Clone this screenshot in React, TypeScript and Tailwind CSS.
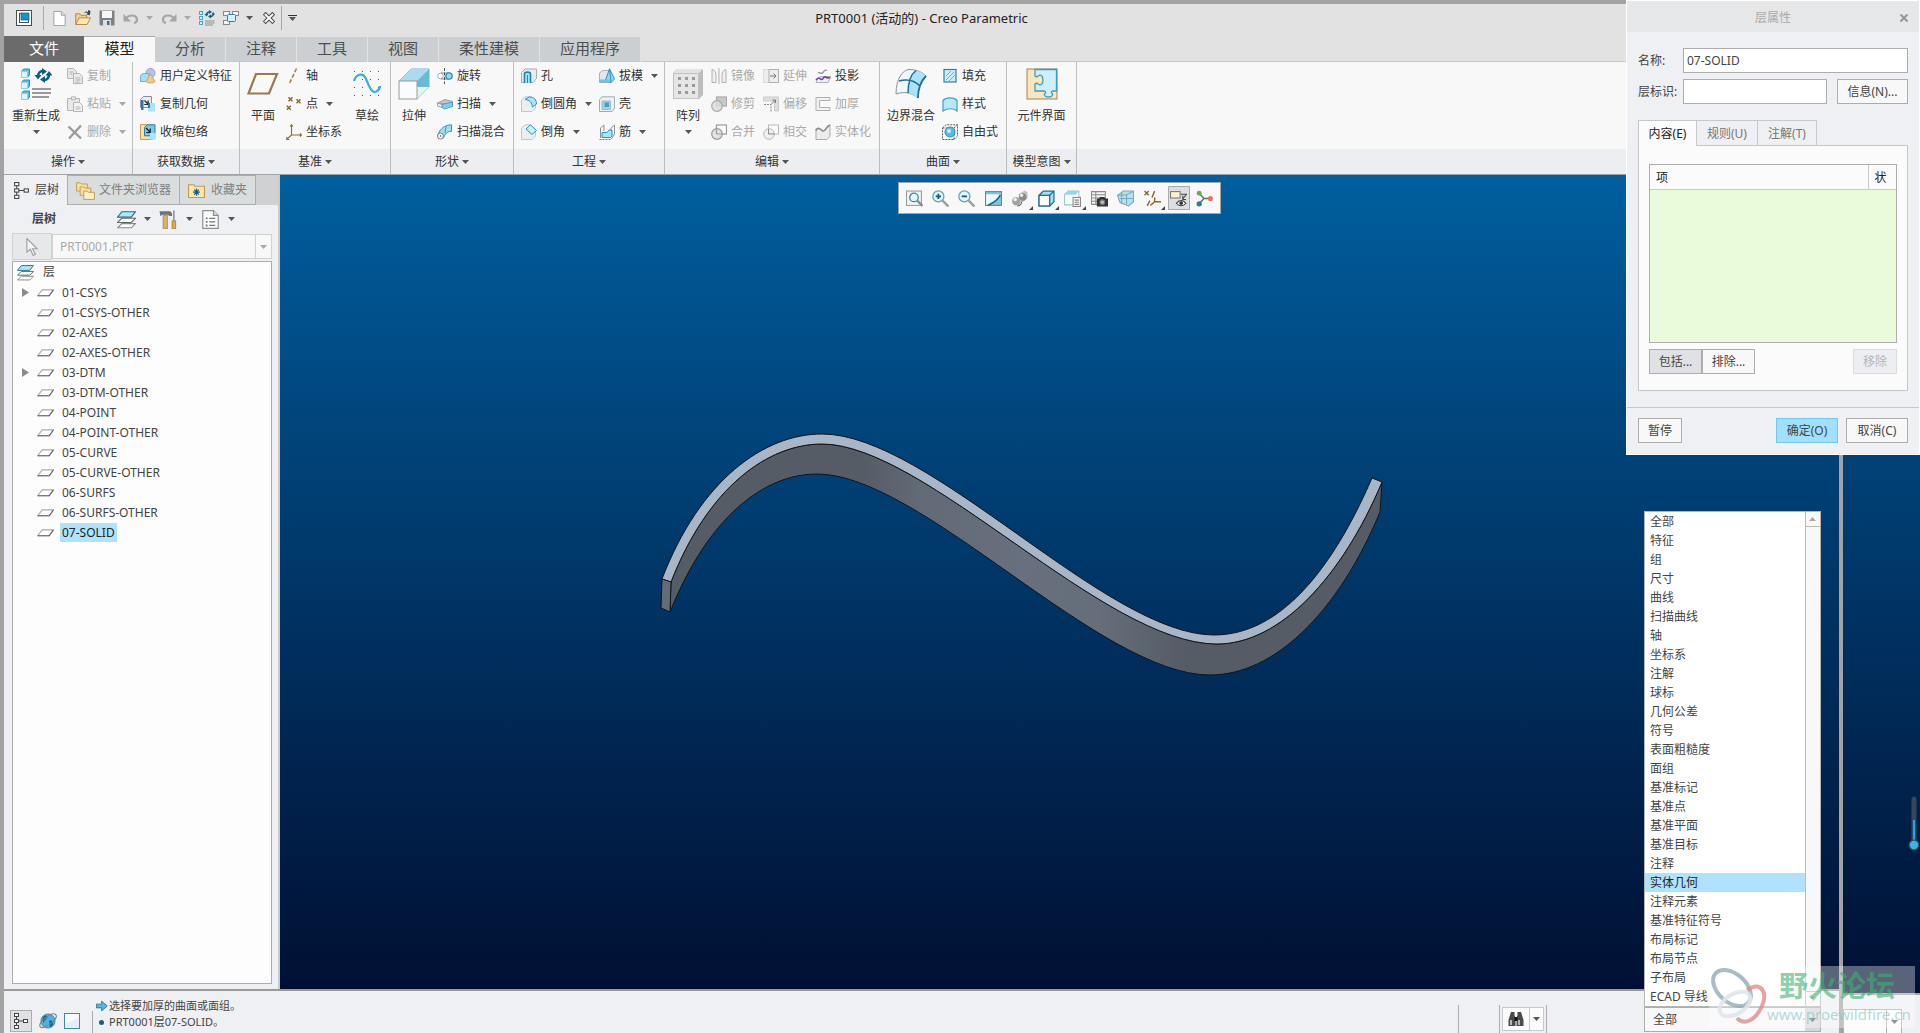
import { useState } from 'react';
import type { ReactNode } from 'react';

interface IconProps {
  name: string;
  size?: number;
}

// Small drawings, all on a 16x16 grid
const icons: Record<string, ReactNode> = {
  app: (
    <>
      <rect x=".5" y=".5" width="15" height="15" fill="#fff" stroke="#4d4d4d" />
      <rect x="3.5" y="3.5" width="9" height="9" fill="#fff" stroke="#4d4d4d" />
      <rect x="5" y="3" width="8" height="7" fill="#0a96d8" stroke="#205a78" strokeWidth=".7" />
    </>
  ),
  newFile: (
    <>
      <path d="M2 .5h8l4 4v11H2z" fill="#fdfeff" stroke="#9aa0a4" />
      <path d="M10 .5v4h4" fill="#dfe6ea" stroke="#9aa0a4" />
    </>
  ),
  open: (
    <>
      <path d="M.7 14.5V3.8h4l1.2 1.5h5.8v2.5" fill="#f1cf8c" stroke="#b98c3c" />
      <path d="M.7 14.5 4 7.8h11.5l-3.4 6.7z" fill="#fbe6b6" stroke="#b98c3c" />
      <path d="M9 3c1-2 3-2 4-.7V0l2.5 1-.6 4.2-3.6-.8 1.3-.7C11.8 2.2 10.400 2 9 3z" fill="#3e4448" />
    </>
  ),
  save: (
    <>
      <path d="M.5.5h15v15h-14l-1-1z" fill="#7c8185" />
      <rect x="3" y="1" width="10" height="7" fill="#f7f7f7" />
      <rect x="4" y="10" width="8" height="6" fill="#d7e2e8" />
      <rect x="8" y="11" width="2.500" height="4" fill="#5e6468" />
    </>
  ),
  undo: (
    <>
      <path d="M3 9C5 4.500 13.500 4 14 9.500c0 2-1.500 3.300-3 3.500" fill="none" stroke="#a3a5a7" strokeWidth="2.200" />
      <path d="M.5 4v7.500H8z" fill="#a3a5a7" />
    </>
  ),
  redo: (
    <>
      <path d="M13 9C11 4.500 2.500 4 2 9.500c0 2 1.500 3.300 3 3.500" fill="none" stroke="#a3a5a7" strokeWidth="2.200" />
      <path d="M15.500 4v7.500H8z" fill="#a3a5a7" />
    </>
  ),
  regen: (
    <>
      <g fill="#cdf1fd" stroke="#2b93bf" strokeWidth=".8">
        <rect x=".6" y="1.500" width="3" height="3" />
        <rect x=".6" y="6.500" width="3" height="3" />
        <rect x=".6" y="11.500" width="3" height="3" />
      </g>
      <path d="M6 11h9.500M6 13h9.500M6 15h8" stroke="#8f8f8f" />
      <path d="M7.500 5c.3-2 1.500-3 3-3M14.500 3.500c-.3 2-1.500 3-3 3" fill="none" stroke="#0d5f86" strokeWidth="1.600" />
      <path d="M10 0l3 2-3 2zM12 4.500 9 6.500l3 2zM5.500 4h4L7.500 6.500zM12.500 4.500h3.500L14.200 2z" fill="#0d5f86" />
    </>
  ),
  windows: (
    <>
      <g fill="#f5f5f5" stroke="#888">
        <rect x=".5" y="1.500" width="6" height="4" />
        <rect x="9.500" y="1.500" width="6" height="4" />
        <rect x=".5" y="10.500" width="6" height="4" />
      </g>
      <rect x="4.500" y="4.500" width="8" height="7" rx="1" fill="#d5f2fc" stroke="#3a7f9c" />
    </>
  ),
  close: (
    <>
      <path d="M3.500 3.500l9 9M12.500 3.500l-9 9" stroke="#4a4a4a" strokeWidth="5.400" strokeLinecap="square" />
      <path d="M3.500 3.500l9 9M12.500 3.500l-9 9" stroke="#fff" strokeWidth="2.800" strokeLinecap="square" />
    </>
  ),
  copy: (
    <g fill="#e9e9e9" stroke="#b5b5b5">
      <path d="M.5.500h6l3 3v7h-9z" />
      <path d="M6.500 5.500h6l3 3v7h-9z" />
      <path d="M2.500 4h4M2.500 6h3M8.500 10h5M8.500 12h5M8.500 14h4" />
    </g>
  ),
  paste: (
    <g fill="#e9e9e9" stroke="#b5b5b5">
      <path d="M.5 2.500h12v12H.5z" />
      <path d="M4.500.800h4v3h-4z" />
      <path d="M6.500 6.500h6l3 3v6h-9z" fill="#f3f3f3" />
      <path d="M8.500 11h5M8.500 13h5" />
    </g>
  ),
  remove: <path d="M1.500 2.500l12.500 12M14 1.500 2 14.500" stroke="#9b9b9b" strokeWidth="2.400" fill="none" />,
  udf: (
    <>
      <circle cx="10.500" cy="5" r="4.500" fill="#b9c3ee" stroke="#7f8fd0" strokeWidth=".8" />
      <path d="M.5 7.500 3 5.500h6v6L7 13.500H.500z" fill="#9fe0f8" stroke="#4fa7cc" strokeWidth=".8" />
      <path d="M10.500 5.500 15 13.500c-1 2-8 2-9 0z" fill="#f0c98a" stroke="#c99a53" strokeWidth=".8" />
    </>
  ),
  copyGeom: (
    <>
      <path d="M.5 3.500 3.500.500h8v8l-3 3h-8z" fill="#e9ecee" stroke="#8b9094" />
      <rect x="1" y="4" width="2.500" height="10" fill="#2d7ba0" />
      <path d="M4.500 4.500 8 8M8.200 4.500v4h-4" stroke="#222" fill="none" strokeWidth="1.200" />
      <rect x="8" y="7" width="7" height="8.500" fill="#a5e6fb" />
      <rect x="8" y="7" width="2" height="5" fill="#2d7ba0" />
    </>
  ),
  shrink: (
    <>
      <path d="M.5.500h6v11h6v4H.500z" fill="#f7dfa9" stroke="#c79d4e" />
      <path d="M4.500 3.500 7 .800h8v8l-3 3H4.500z" fill="#79c8e6" stroke="#2d7ba0" />
      <path d="M6 4l4 4M10.200 4.500v4h-4" stroke="#123" fill="none" strokeWidth="1.200" />
      <rect x="10" y="9" width="6" height="6.500" fill="#a5e6fb" />
    </>
  ),
  axis: <path d="M10.500.500 3.500 15.500" stroke="#a07c3e" strokeWidth="1.500" strokeDasharray="4 2" fill="none" />,
  point: (
    <path d="M2 .8l4 4M6 .8l-4 4M10 2.800l4 4M14 2.800l-4 4M.3 9.300l4 4M4.300 9.300l-4 4" stroke="#8a6a33" strokeWidth="1.500" transform="translate(.5 .5)" fill="none" />
  ),
  csys: <path d="M5.500 11V1M5.500 11h10M5.500 11l-5 4.500M4 2.500 5.500.800 7 2.500M14 9.500l1.500 1.500L14 12.500M.8 13v2.500h2.500" stroke="#8a6a33" strokeWidth="1.100" fill="none" />,
  revolve: (
    <>
      <circle cx="3.500" cy="8" r="2.800" fill="#fff" stroke="#aaa" />
      <path d="M4 5h8M4 11h8" stroke="#4f9fc0" />
      <circle cx="12" cy="8" r="3.200" fill="#8bdcf7" stroke="#2d8fb8" strokeWidth="1.300" />
      <path d="M7.500 0v16" stroke="#555" strokeDasharray="3 1.500" />
    </>
  ),
  sweep: (
    <>
      <path d="M.5 7 8 3.500l7.500 2V9L8 8z" fill="#c4c8ca" stroke="#8d9295" strokeWidth=".8" />
      <path d="M5 8.500 15.500 6v4.500l-8 2.500L5 11.500z" fill="#7fd0ec" stroke="#3a93b5" strokeWidth=".8" />
      <path d="M.5 7v3L5 11.500v-3z" fill="#eceeef" stroke="#8d9295" strokeWidth=".8" />
    </>
  ),
  sweptBlend: (
    <>
      <path d="M1 11C3 5 7 1 14.500.800v6.500C10 7.500 8 10 6.500 14z" fill="#9fe0f8" stroke="#3a93b5" />
      <path d="M9 2.500 8 9" stroke="#3a93b5" />
      <circle cx="3.500" cy="12" r="3" fill="#fff" stroke="#777" />
      <circle cx="3.500" cy="12" r=".8" fill="#444" />
    </>
  ),
  hole: (
    <>
      <path d="M.5 4.500 4 1h11.500v9.500L12 14.500H.500z" fill="#e9ecee" stroke="#a6abae" />
      <path d="M3.500 15V6c0-2.500 6-2.500 6 0v9" fill="#a8e6fa" stroke="#1c86b3" strokeWidth="1.600" />
      <path d="M6.500 7v8" stroke="#1c86b3" />
    </>
  ),
  round: (
    <>
      <path d="M.5 4 4 .800h5L14.500 7v5L11 15.500H.500z" fill="#eceeef" stroke="#b8bcbe" strokeWidth=".8" />
      <path d="M4 3.500 8.500.800C13 1 15.500 4 15.500 8L11.500 11C11 7 9 4 4 3.500z" fill="#a8e6fa" stroke="#2e90b8" />
    </>
  ),
  chamfer: (
    <>
      <path d="M.5 4 4 .800h5L14.500 7v5L11 15.500H.500z" fill="#eceeef" stroke="#b8bcbe" strokeWidth=".8" />
      <path d="M5 5 9.500.800 15.500 6.500l-4.500 4z" fill="#c6f0fc" stroke="#2e90b8" />
    </>
  ),
  draft: (
    <>
      <path d="M.5 5 4 2.500h7v10L8 14.500H.500z" fill="#e4e8ea" stroke="#9da2a5" strokeWidth=".8" />
      <path d="M6 13.500 10.500.800 15.500 11 12 14.500z" fill="#8ed8f3" stroke="#2e90b8" />
      <path d="M10.500.800 12 14.500" stroke="#2e90b8" />
      <path d="M.5 14.500h10v-3h-10z" fill="#6fc1df" />
    </>
  ),
  shell: (
    <>
      <path d="M.5 3.500 3 .800h12.500V12L13 15.500H.500z" fill="#eef0f1" stroke="#a6abae" />
      <rect x="3" y="5" width="8.500" height="8.500" fill="#8edaf4" stroke="#8fb4c2" strokeWidth=".8" />
      <rect x="5.500" y="6.500" width="4.500" height="4.500" fill="#4a9dc0" />
    </>
  ),
  rib: (
    <>
      <path d="M1.500 4v10M1.500 4 5 1v6M15.500 1v9l-3 5M15.500 1 12 4v5" fill="none" stroke="#8d9295" />
      <path d="M3 13.500V8.500h5l2-2.500h3v6l-1.500 1.500z" fill="#a8e6fa" stroke="#2e90b8" />
      <path d="M.5 15.500h12" stroke="#2e90b8" strokeDasharray="2 1" />
    </>
  ),
  mirror: (
    <g fill="#f0f0f0" stroke="#b0b0b0">
      <path d="M1 1.500c3 .5 4 3 4 6v7H1zM15 1.500c-3 .5-4 3-4 6v7h4z" />
      <path d="M8 0v16" />
    </g>
  ),
  trim: (
    <g stroke="#a9a9a9" strokeWidth="1.200">
      <rect x="5.500" y="1" width="10" height="9" fill="#c9c9c9" />
      <circle cx="6" cy="10" r="5.300" fill="#dcdcdc" fillOpacity=".8" />
    </g>
  ),
  merge: (
    <g stroke="#9a9a9a" strokeWidth="1.200">
      <rect x="5.500" y="1" width="10" height="9" fill="#fbfbfb" />
      <circle cx="6" cy="10" r="5.300" fill="#e4e4e4" />
      <path d="M5.500 10V5M6 10h5" />
    </g>
  ),
  intersect: (
    <g stroke="#b9b9b9">
      <rect x="5.500" y="1" width="10" height="9" fill="#fafafa" />
      <circle cx="6" cy="10" r="5.300" fill="#ededed" fillOpacity=".8" />
      <path d="M5.500 5v5h6" fill="none" stroke="#8a8a8a" />
    </g>
  ),
  extend: (
    <g fill="#ededed" stroke="#b0b0b0">
      <path d="M.5 1.500h6v13h-6z" stroke="#dcdcdc" />
      <rect x="6" y="1.500" width="9.500" height="13" />
      <path d="M7 8h6M10.500 5.500 13 8l-2.500 2.500" stroke="#777" fill="none" />
    </g>
  ),
  offset: (
    <g fill="none" stroke="#b0b0b0">
      <path d="M.5 1h15v14h-4V5H.500z" fill="#dedede" stroke="#cbcbcb" />
      <path d="M1 8.500h7V16" strokeDasharray="2 1" stroke="#888" />
      <path d="M8 8.500l4-4M9.500 4H12.500v3" stroke="#777" />
    </g>
  ),
  project: (
    <g fill="none">
      <path d="M3 5c2-1 3 1 4.500 0S9 1 12 2.500" stroke="#909090" strokeWidth="1.300" />
      <path d="M2 12 5 8.500h11L13 14.500H1z" stroke="#b0b0b0" fill="#f0f0f0" />
      <path d="M1 12c3-4 4-1 5.500-.5s2-3.500 4-2.500 2 1.500 4.500.5" stroke="#7a3fb0" strokeWidth="1.600" />
    </g>
  ),
  thicken: <path d="M1 1.500h14v3H4.500v7H15v3H1z" fill="#f2f2f2" stroke="#b0b0b0" />,
  solidify: (
    <>
      <path d="M1 7v8.500h11l3-3V3C12 0 10 7 8 7S4 2 1 7z" fill="#ececec" stroke="#a9a9a9" />
      <path d="M.5 6.500C4 1 6 7 8.500 7S12 0 15.500 1.500" stroke="#8e8e8e" strokeWidth="1.600" fill="none" />
    </>
  ),
  fill: (
    <>
      <rect x="2" y="1.500" width="12" height="12.500" fill="#c9effc" stroke="#2e7fa3" strokeWidth="1.200" />
      <path d="M4 8l5-5M4 12l8-8M7 13l6-6" stroke="#4ea4c7" strokeWidth=".8" />
    </>
  ),
  style: <path d="M1 4.500C4 1 12 1 15 4.500V15c-3-3-10-3-14 0z" fill="#b4e8fa" stroke="#4a9dc0" strokeWidth="1.200" />,
  freestyle: (
    <>
      <path d="M.5 4 4 .800h11.500V12L12 15.500H.500zM.5 4H12v11.500M12 4l3.500-3.200" fill="none" stroke="#5b5b5b" strokeDasharray="2 1" />
      <circle cx="8" cy="8" r="5" fill="#54bde6" stroke="#2e90b8" />
      <circle cx="7" cy="7" r="2" fill="#c6f0fc" />
    </>
  ),
  tree: (
    <g fill="#fff" stroke="#444">
      <path d="M3.500 3v10M3.500 8h7" />
      <rect x="1.500" y=".5" width="4" height="3" />
      <rect x="1.500" y="6.500" width="4" height="3" />
      <rect x="1.500" y="12.500" width="4" height="3" />
      <rect x="10.500" y="6.500" width="4" height="3" />
    </g>
  ),
  folders: (
    <g fill="#f9dfa4" stroke="#c09a50" strokeWidth=".8">
      <path d="M.5 8.500V1.500h3l1 1h5v6z" />
      <path d="M3.500 12V5h3l1 1h5v6z" />
      <path d="M6.500 15.500v-7h3l1 1h5v6z" fill="#fdeec6" />
    </g>
  ),
  favorites: (
    <>
      <path d="M.5 14.500v-12h5l1 1.500h9v10.500z" fill="#fbe6b0" stroke="#c09a50" />
      <path d="M8 6v7M4.800 9.500h6.400M5.800 7.200l4.400 4.600M10.200 7.200l-4.400 4.600" stroke="#155f85" strokeWidth="1.100" />
    </>
  ),
  layers: (
    <g stroke="#3c3c3c" strokeWidth=".9">
      <path d="M.5 15 4 11.500h11.500L12 15z" fill="#fff" stroke="#888" />
      <path d="M.5 10.500 4 7h11.500L12 10.500z" fill="#fff" stroke="#666" />
      <path d="M.5 6 4 1.500h11.500L12 6z" fill="#aee6fb" stroke="#1f6f94" />
    </g>
  ),
  tools: (
    <>
      <path d="M.5 1h9l1.500 2v2H9L7 4H3L1 5z" fill="#6d7276" />
      <path d="M3.500 4.500h3.500V16H3.500z" fill="#e0b269" stroke="#9c7432" strokeWidth=".6" />
      <path d="M12.500.500v8" stroke="#8b8f92" strokeWidth="1.300" />
      <path d="M11 9h3v7h-3z" fill="#e0a850" stroke="#9c7432" strokeWidth=".6" />
    </>
  ),
  settings: (
    <>
      <path d="M1.500.500h9l4 4v11h-13z" fill="#fbfbfb" stroke="#8b8f92" />
      <path d="M10.500.500v4h4" fill="#ddd" stroke="#8b8f92" />
      <path d="M7 7h5M7 10h5M7 13h5" stroke="#777" />
      <path d="M4 6.300h1.500v1.500H4zM4 9.300h1.500v1.500H4zM4 12.300h1.500v1.500H4z" fill="#777" />
    </>
  ),
  cursor: <path d="M3.500.500v12l3-2.500 2.500 5.500 2-1L8.500 9.500h4z" fill="#f4f4f4" stroke="#9c9fa1" />,
  layer: (
    <>
      <path d="M.7 11 5 5.500h10.500L11.500 11z" fill="#fff" stroke="#aaa" />
      <path d="M.7 11h10.800L15.500 5.500" fill="none" stroke="#666" />
    </>
  ),
  globe: (
    <>
      <circle cx="8" cy="8" r="6.300" fill="#4ab4e0" stroke="#1b6f98" strokeWidth=".6" />
      <path d="M4 4c3-2 4 0 3 1.500S4.500 7 4.500 9.500C3 8 2.500 6 4 4zM9 8c2-1 3.500 0 3.500 2S11 13 10 13s0-2-1-5z" fill="#175f86" />
      <path d="M1 13C-1 9 12-1 15 2.500S4 16.500 1 13z" fill="none" stroke="#7c8286" />
    </>
  ),
  browser: (
    <>
      <rect x=".5" y=".5" width="15" height="15" fill="#e3eff4" stroke="#4089a8" />
      <path d="M1 1h14v4L1 11z" fill="#fff" fillOpacity=".7" />
    </>
  ),
  find: (
    <g fill="#4a4a4a">
      <path d="M3 1h3.500v3l1 3v8H.500V9zM13 1H9.500v3l-1 3v8h7V9z" />
      <path d="M2 9h2v5H2zM10 9h2v5h-2z" fill="#b5b5b5" />
      <rect x="6.500" y="6" width="3" height="4" fill="#111" />
    </g>
  ),
  refit: (
    <>
      <rect x=".5" y="1" width="14" height="13.500" fill="#f4f4f4" stroke="#9a9a9a" />
      <circle cx="7.500" cy="7" r="4" fill="#e3f6fd" stroke="#3c87a6" strokeWidth="1.200" />
      <path d="M10.500 10l5 5" stroke="#8a8a8a" strokeWidth="2.200" />
    </>
  ),
  zoomIn: (
    <>
      <circle cx="6" cy="6" r="5.200" fill="#e3f6fd" stroke="#5fa3bf" strokeWidth="1.200" />
      <path d="M3.500 6h5M6 3.500v5" stroke="#0c5f86" strokeWidth="1.700" />
      <path d="M10 10l5.500 5.500" stroke="#a0a0a0" strokeWidth="2.400" />
    </>
  ),
  zoomOut: (
    <>
      <circle cx="6" cy="6" r="5.200" fill="#e3f6fd" stroke="#5fa3bf" strokeWidth="1.200" />
      <path d="M3.500 6h5" stroke="#0c5f86" strokeWidth="1.700" />
      <path d="M10 10l5.500 5.500" stroke="#a0a0a0" strokeWidth="2.400" />
    </>
  ),
  repaint: (
    <>
      <rect x=".5" y="1.500" width="15" height="13" fill="#7dc4dd" stroke="#5d8797" />
      <path d="M1 4h14C14 9 8 11 1 14z" fill="#e9f8fd" />
      <path d="M3 14.500C8 12 13 8 14.500 4.500" stroke="#175f86" strokeWidth="1.500" fill="none" />
    </>
  ),
  render: (
    <>
      <path d="M7 4 13 .500l2.500 1.500v6L10 12z" fill="#c2c2c2" />
      <circle cx="11" cy="6.500" r="3.500" fill="#8a8a8a" />
      <circle cx="5" cy="10.500" r="4" fill="#a3a3a3" />
      <path d="M6 15c3-.5 4-2 4-4" stroke="#666" fill="none" />
      <circle cx="4" cy="9" r="1.600" fill="#f0f0f0" />
      <circle cx="10" cy="5" r="1.600" fill="#e8e8e8" />
    </>
  ),
  display: (
    <g stroke="#1f6f94" strokeWidth="1.200">
      <path d="M1 5 5 1h10v10l-4 4H1z" fill="#a8e0f5" />
      <rect x="1" y="5" width="10" height="10" fill="#fdfdfd" />
      <path d="M11 5l4-4" />
    </g>
  ),
  saved: (
    <>
      <path d="M.5 4.500 4 1h10v8H10v5H.500z" fill="#f8fdff" stroke="#9ac6d8" />
      <path d="M.5 4.500 4 1h10l-3 3.500z" fill="#8ed8f3" />
      <rect x="8.500" y="7" width="7" height="8.500" fill="#f3f3f3" stroke="#888" />
      <path d="M10 9.500h4M10 11.500h4M10 13.500h4" stroke="#888" />
    </>
  ),
  camera: (
    <>
      <path d="M.5 1.500h13v12H.500zM.5 4.500h13M.5 7.500h13M.5 10.500h13M4.500 1.500v12" fill="#f4f4f4" stroke="#8c8c8c" />
      <path d="M5.500 8h2l1-1.500h4l1 1.500h2.500v7.500H5.500z" fill="#333" />
      <circle cx="10.700" cy="11.500" r="2.200" fill="#bbb" stroke="#777" />
    </>
  ),
  perspective: (
    <>
      <path d="M.5 5 6 1h9.500v10L11 15 3 12z" fill="#b5e2f1" stroke="#79a9bb" />
      <path d="M.5 5 9 4.500l6-3M9 4.500v9M4.500 2v10M3 8h12" stroke="#79a9bb" fill="none" />
    </>
  ),
  datum: (
    <g stroke="#8a6a33" strokeWidth="1.400" fill="none">
      <path d="M.5 1l4 4M4.500 1l-4 4M10 1 7.500 7M5.500 10l-2.500 5" />
      <path d="M10 11V7M10 11h6M10 11l-4 3.500" />
    </g>
  ),
  annotation: (
    <>
      <rect x=".5" y="1.500" width="9" height="6" fill="#fdf0cf" stroke="#777" />
      <path d="M10 4h5.500L12 8.500M12 5.500v3.500h3" stroke="#444" fill="none" />
      <path d="M6 12.500c2.500-3.500 6.500-3.500 9 0-2.500 3-6.500 3-9 0z" fill="#fff" stroke="#333" />
      <circle cx="10.500" cy="12.300" r="1.800" fill="#333" />
    </>
  ),
  spin: (
    <>
      <path d="M3.500 3.500 7.500 8 3 13M7.500 8h6" stroke="#666" strokeWidth="1.300" fill="none" />
      <circle cx="3" cy="3" r="2.300" fill="#5fae52" />
      <circle cx="3" cy="13" r="2.500" fill="#2d7ba8" />
      <circle cx="13.500" cy="8" r="2.400" fill="#e0726c" />
    </>
  ),
  prompt: <path d="M.5 5.500h7v-4L15 8l-7.500 6.500v-4h-7z" fill="#54b8e0" stroke="#1a6688" />,
};

// Large ribbon drawings on a 32x32 grid
const bigIcons: Record<string, ReactNode> = {
  regen: (
    <>
      {[0, 11, 22].map((y) => (
        <g key={y} stroke="#2b93bf">
          <path d={`M1.500 ${y + 3.500}l2-2.500h6v6l-2 2.500h-6z`} fill="#57bfe6" />
          <rect x="1.500" y={y + 3.500} width="6" height="6" fill="#dff6fe" stroke="#8fd0e8" />
        </g>
      ))}
      <path d="M18 9c0-4 2-6 5-6M29 6c0 4-2 6-5 6" stroke="#0d5f86" strokeWidth="2.600" fill="none" />
      <path d="M22 0l5 3.500L22 7zM25 8l-5 3.500 5 3.500zM14.500 7h7L18 11.500zM25.500 7.500h7L29 3z" fill="#0d5f86" />
      <path d="M12 21h19M12 25h19M12 29h17" stroke="#9a9a9a" strokeWidth="2" />
    </>
  ),
  plane: <path d="M1.500 25.500 9 6h21l-8 19.500z" fill="none" stroke="#9a7a45" strokeWidth="2.200" />,
  sketch: (
    <>
      <g fill="#555">
        {[3, 11, 19, 27].map((x) => [3, 11, 19, 27].map((y) => <rect key={`${x}-${y}`} x={x} y={y} width="1" height="1" />))}
      </g>
      <path d="M3 13c2-7 9-9 12-2s6 16 11 12c2-1 3-3 3-5" fill="none" stroke="#35aee0" strokeWidth="2.200" />
    </>
  ),
  extrude: (
    <>
      <path d="M1 13 13 1h18v18L19 31z" fill="#c5ecf9" stroke="#6fb3cc" />
      <path d="M13 1h18L19 13H1z" fill="#a9dcee" />
      <path d="M31 1v18H19v-6z" fill="#6db8d4" />
      <path d="M19 31 31 19H19z" fill="#dff5fc" />
      <rect x="1" y="13" width="18" height="18" fill="#fbfbfb" stroke="#9a9a9a" />
    </>
  ),
  pattern: (
    <>
      <path d="M1 5 5 1h26v26l-4 4z" fill="#bdbdbd" />
      <path d="M1 5 5 1h26l-4 4z" fill="#e3e3e3" />
      <rect x="1.500" y="5.500" width="25" height="25" fill="#e6e6e6" stroke="#c2c2c2" />
      {[6, 13, 20].map((x) => [9, 16, 23].map((y) => <rect key={`${x}-${y}`} x={x} y={y} width="3" height="3" fill="#9a9a9a" />))}
    </>
  ),
  boundary: (
    <>
      <path d="M1 26C1 10 8 2 14 1.500c8 0 14 3 17 6.500-5 5-8 12-8 22-6-5-13-7-22-4z" fill="#eef8fc" stroke="#8a9498" />
      <path d="M21 2.500c4 1 8 3 10 5.500-5 5-8 12-8 22-3-2-7-5-10-5C13 15 15 7 21 2.500z" fill="#a9e3f7" />
      <path d="M21 2.500C15 7 13 15 13 25M4 13c8-2 16 0 21 5" fill="none" stroke="#1f6f94" strokeWidth="1.500" />
      <path d="M31 8c-5 5-8 12-8 22" fill="none" stroke="#1f6f94" strokeWidth="1.800" />
    </>
  ),
  component: (
    <>
      <rect x="1" y="1" width="30" height="30" fill="#fbe5bd" stroke="#a88249" />
      <path
        d="M9 1.500h21.500v21.500h-4c-2 1-1 2 0 3 1 2-2 3-4 3s-5-1-4-3c1-1 2-2 0-3H9v-7c1-1 2-1 3 0 3 2 5 0 5-4s-2-6-5-4c-1 1-2 1-3 0z"
        fill="#cdf1fc"
        stroke="#3b9bc2"
        strokeWidth="1.300"
      />
    </>
  ),
};

function Icon({ name, size = 16 }: IconProps) {
  return (
    <svg width={size} height={size} viewBox="0 0 16 16" className="shrink-0" aria-hidden="true">
      {icons[name]}
    </svg>
  );
}

function Caret({ light = false }: { light?: boolean }) {
  return (
    <svg width="7" height="4" viewBox="0 0 7 4" className="shrink-0" aria-hidden="true">
      <path d="M0 0h7L3.500 4z" fill={light ? '#a8a8a8' : '#555'} />
    </svg>
  );
}

function Tool({ icon, label, caret, disabled }: { icon: string; label: string; caret?: boolean; disabled?: boolean }) {
  return (
    <button disabled={disabled} className="flex h-7 items-center gap-1 whitespace-nowrap disabled:text-[#aaaaaa]">
      <Icon name={icon} />
      <span>{label}</span>
      {caret && (
        <span className="ml-1">
          <Caret light={disabled} />
        </span>
      )}
    </button>
  );
}

function BigTool({ icon, label, caret, wide }: { icon: string; label: string; caret?: boolean; wide?: boolean }) {
  return (
    <button className={`flex flex-col items-center whitespace-nowrap pt-[6px] ${wide ? 'w-14' : 'w-10'}`}>
      <svg width="32" height="32" viewBox="0 0 32 32" aria-hidden="true">
        {bigIcons[icon]}
      </svg>
      <span className="mt-2 leading-4">{label}</span>
      {caret && (
        <span className="mt-[6px]">
          <Caret />
        </span>
      )}
    </button>
  );
}

function Group({ title, className, children }: { title: string; className: string; children: ReactNode }) {
  return (
    <section className={`flex shrink-0 flex-col border-r border-[#bcbec0] ${className}`}>
      <div className="flex h-[87px] items-start gap-[3px]">{children}</div>
      <button className="flex h-[25px] items-center justify-center gap-[3px] bg-[#eceef1]">
        {title}
        <Caret />
      </button>
    </section>
  );
}

const ribbonTabs = [
  { label: '分析', width: 'w-[70px]' },
  { label: '注释', width: 'w-[70px]' },
  { label: '工具', width: 'w-[70px]' },
  { label: '视图', width: 'w-[70px]' },
  { label: '柔性建模', width: 'w-[100px]' },
  { label: '应用程序', width: 'w-[100px]' },
];

const viewTools = [
  { icon: 'refit', label: '重新调整' },
  { icon: 'zoomIn', label: '放大' },
  { icon: 'zoomOut', label: '缩小' },
  { icon: 'repaint', label: '重画' },
  { icon: 'render', label: '渲染选项', menu: true },
  { icon: 'display', label: '显示样式', menu: true },
  { icon: 'saved', label: '已保存方向', menu: true },
  { icon: 'camera', label: '视图管理器' },
  { icon: 'perspective', label: '透视图' },
  { icon: 'datum', label: '基准显示过滤器', menu: true },
  { icon: 'annotation', label: '注释显示', pressed: true },
  { icon: 'spin', label: '旋转中心' },
];

const layers = [
  '01-CSYS',
  '01-CSYS-OTHER',
  '02-AXES',
  '02-AXES-OTHER',
  '03-DTM',
  '03-DTM-OTHER',
  '04-POINT',
  '04-POINT-OTHER',
  '05-CURVE',
  '05-CURVE-OTHER',
  '06-SURFS',
  '06-SURFS-OTHER',
  '07-SOLID',
];

const filterOptions = [
  '全部',
  '特征',
  '组',
  '尺寸',
  '曲线',
  '扫描曲线',
  '轴',
  '坐标系',
  '注解',
  '球标',
  '几何公差',
  '符号',
  '表面粗糙度',
  '面组',
  '基准标记',
  '基准点',
  '基准平面',
  '基准目标',
  '注释',
  '实体几何',
  '注释元素',
  '基准特征符号',
  '布局标记',
  '布局节点',
  '子布局',
  'ECAD 导线',
];

function TitleBar() {
  return (
    <div className="grid h-8 grid-cols-[1fr_auto_1fr] items-center bg-[#e2e2e2] pb-1 text-[#222]">
      <div className="flex h-7 items-center pl-3">
        <button aria-label="窗口"><Icon name="app" /></button>
        <span className="ml-[11px] mr-2 h-6 w-px bg-[#a9a9a9]" />
        <div className="flex items-center gap-2">
          <button aria-label="新建"><Icon name="newFile" size={15} /></button>
          <button aria-label="打开"><Icon name="open" /></button>
          <button aria-label="保存"><Icon name="save" /></button>
          <button aria-label="撤消" className="flex items-center gap-[7px]"><Icon name="undo" /><Caret light /></button>
          <button aria-label="重做" className="flex items-center gap-[7px]"><Icon name="redo" /><Caret light /></button>
          <button aria-label="重新生成"><Icon name="regen" /></button>
          <button aria-label="窗口列表" className="flex items-center gap-[7px]"><Icon name="windows" /><Caret /></button>
          <button aria-label="关闭" className="ml-[2px]"><Icon name="close" size={12} /></button>
        </div>
        <span className="mx-[6px] h-6 w-px bg-[#a9a9a9]" />
        <button aria-label="自定义" className="flex flex-col items-center gap-px">
          <span className="h-px w-[9px] bg-[#333]" />
          <Caret />
        </button>
      </div>
      <h1 className="text-[13px] leading-4">PRT0001 (活动的) - Creo Parametric</h1>
    </div>
  );
}

function Ribbon() {
  return (
    <>
      <nav className="flex h-[26px] items-stretch bg-[#e2e2e2] text-[15px] leading-5 text-[#4c4e50]">
        <button className="w-20 bg-[#6b6b6b] pb-[3px] text-white">文件</button>
        <button className="w-[71px] border-t border-[#a9a9a9] bg-[#f8f8f8] pb-[3px] text-[#222]">模型</button>
        {ribbonTabs.map((tab) => (
          <button key={tab.label} className={`mr-px border-b border-t border-b-[#c6c8ca] border-t-[#e2e2e2] bg-[#cbcfd2] pb-[2px] ${tab.width}`}>
            {tab.label}
          </button>
        ))}
        <span className="flex-1 border-b border-[#c6c8ca]" />
      </nav>
      <div className="flex border-b border-[#a3a3a3] bg-[#f8f8f8]">
        <Group title="操作" className="w-[129px] [&>div]:pl-1">
          <BigTool icon="regen" label="重新生成" caret wide />
          <div>
            <Tool icon="copy" label="复制" disabled />
            <Tool icon="paste" label="粘贴" caret disabled />
            <Tool icon="remove" label="删除" caret disabled />
          </div>
        </Group>
        <Group title="获取数据" className="w-[107px] [&>div]:pl-[7px]">
          <div>
            <Tool icon="udf" label="用户定义特征" />
            <Tool icon="copyGeom" label="复制几何" />
            <Tool icon="shrink" label="收缩包络" />
          </div>
        </Group>
        <Group title="基准" className="w-[151px] [&>div]:pl-[3px]">
          <BigTool icon="plane" label="平面" />
          <div className="w-[58px]">
            <Tool icon="axis" label="轴" />
            <Tool icon="point" label="点" caret />
            <Tool icon="csys" label="坐标系" />
          </div>
          <BigTool icon="sketch" label="草绘" />
        </Group>
        <Group title="形状" className="w-[123px] [&>div]:pl-[3px]">
          <BigTool icon="extrude" label="拉伸" />
          <div>
            <Tool icon="revolve" label="旋转" />
            <Tool icon="sweep" label="扫描" caret />
            <Tool icon="sweptBlend" label="扫描混合" />
          </div>
        </Group>
        <Group title="工程" className="w-[151px] [&>div]:pl-[7px]">
          <div className="w-[75px]">
            <Tool icon="hole" label="孔" />
            <Tool icon="round" label="倒圆角" caret />
            <Tool icon="chamfer" label="倒角" caret />
          </div>
          <div>
            <Tool icon="draft" label="拔模" caret />
            <Tool icon="shell" label="壳" />
            <Tool icon="rib" label="筋" caret />
          </div>
        </Group>
        <Group title="编辑" className="w-[215px] [&>div]:pl-[3px]">
          <BigTool icon="pattern" label="阵列" caret />
          <div className="w-[49px]">
            <Tool icon="mirror" label="镜像" disabled />
            <Tool icon="trim" label="修剪" disabled />
            <Tool icon="merge" label="合并" disabled />
          </div>
          <div className="w-[49px]">
            <Tool icon="extend" label="延伸" disabled />
            <Tool icon="offset" label="偏移" disabled />
            <Tool icon="intersect" label="相交" disabled />
          </div>
          <div>
            <Tool icon="project" label="投影" />
            <Tool icon="thicken" label="加厚" disabled />
            <Tool icon="solidify" label="实体化" disabled />
          </div>
        </Group>
        <Group title="曲面" className="w-[127px] [&>div]:pl-[3px]">
          <BigTool icon="boundary" label="边界混合" wide />
          <div>
            <Tool icon="fill" label="填充" />
            <Tool icon="style" label="样式" />
            <Tool icon="freestyle" label="自由式" />
          </div>
        </Group>
        <Group title="模型意图" className="w-[70px] [&>div]:justify-center">
          <BigTool icon="component" label="元件界面" wide />
        </Group>
        <div className="flex flex-1 flex-col justify-end">
          <div className="h-[25px] bg-[#eceef1]" />
        </div>
      </div>
    </>
  );
}

function LayerPanel() {
  const [selected, setSelected] = useState('07-SOLID');

  return (
    <aside className="flex w-[276px] shrink-0 flex-col border-r-2 border-[#c9cbcd] bg-[#eef0f3] text-[#444]">
      <div className="flex h-[30px] items-stretch bg-[#cfd1d3]">
        <button className="flex w-[63px] items-center gap-[5px] bg-[#eef0f3] pl-[9px]">
          <Icon name="tree" size={17} />
          层树
        </button>
        <button className="flex w-[113px] items-center gap-1 border border-[#adadad] bg-[#dadddd] pl-2 text-[#808080]">
          <Icon name="folders" size={19} />
          文件夹浏览器
        </button>
        <button className="flex w-[76px] items-center gap-[6px] border-y border-r border-[#adadad] bg-[#dadddd] pl-2 text-[#808080]">
          <Icon name="favorites" size={17} />
          收藏夹
        </button>
      </div>
      <div className="flex h-7 items-center pl-7">
        <h2 className="w-[85px] font-bold">层树</h2>
        <button aria-label="显示" className="flex w-[42px] items-center gap-2"><Icon name="layers" size={19} /><Caret /></button>
        <button aria-label="工具" className="flex w-[42px] items-center gap-2"><Icon name="tools" size={19} /><Caret /></button>
        <button aria-label="设置" className="flex items-center gap-2"><Icon name="settings" size={19} /><Caret /></button>
      </div>
      <div className="ml-2 mr-[6px] flex h-[27px] items-stretch">
        <button aria-label="选择" disabled className="flex w-10 items-center justify-center border border-[#cfd1d3] bg-[#e6e8ea]">
          <Icon name="cursor" size={18} />
        </button>
        <div className="my-px flex flex-1 items-stretch border border-[#cfd1d3] bg-[#f8f8f8]">
          <select aria-label="活动模型" disabled className="w-full appearance-none pl-[7px] text-[#aaaaaa]">
            <option>PRT0001.PRT</option>
          </select>
          <span className="pointer-events-none flex w-4 shrink-0 items-center justify-center border-l border-[#cfd1d3]">
            <Caret light />
          </span>
        </div>
      </div>
      <div className="mb-[5px] ml-2 mr-[6px] mt-px min-h-0 flex-1 border border-[#adadad] bg-[#fdfdfd]">
        <div className="flex h-5 items-center gap-[9px] pl-1">
          <Icon name="layers" size={17} />
          层
        </div>
        <ul>
          {layers.map((layer) => (
            <li key={layer} className="flex h-5 items-center">
              <span className="flex w-6 justify-center pl-px">
                {(layer === '01-CSYS' || layer === '03-DTM') && (
                  <svg width="7" height="9" viewBox="0 0 7 9" aria-hidden="true">
                    <path d="M0 0l7 4.500L0 9z" fill="#8c8c8c" />
                  </svg>
                )}
              </span>
              <Icon name="layer" size={17} />
              <button
                onClick={() => setSelected(layer)}
                className={`ml-[6px] h-[19px] px-[2px] leading-[19px] ${selected === layer ? 'bg-[#aee2fe] text-[#222]' : ''}`}
              >
                {layer}
              </button>
            </li>
          ))}
        </ul>
      </div>
    </aside>
  );
}

// Edges of the swept part in canvas coordinates. The lower two run backwards so that the faces can be closed.
const topEdge = 'C420 305 484 259 542 259C650 259 826 460 934 460C1000 460 1052 395 1092 303';
const frontEdge = 'C428 312 488 269 542 269C645 269 824 469 937 469C1000 469 1062 402 1102 307';
const frontEdgeBack = 'C1062 402 1000 469 937 469C824 469 645 269 542 269C488 269 428 312 391 407';
const bottomEdgeBack = 'C1058 438 994 500 930 500C820 500 641 299 537 299C484 299 428 342 390 437';

function PartModel() {
  return (
    <svg viewBox="0 0 1559 814" className="absolute inset-0 h-full w-full" role="img" aria-label="PRT0001">
      <defs>
        <linearGradient id="side" gradientUnits="userSpaceOnUse" x1="390" x2="1102" y1="0" y2="0">
          <stop offset="0" stopColor="#555c66" />
          <stop offset=".27" stopColor="#555c66" />
          <stop offset=".35" stopColor="#626a76" />
          <stop offset=".5" stopColor="#686f7e" />
          <stop offset=".6" stopColor="#656e7a" />
          <stop offset=".72" stopColor="#555c66" />
          <stop offset="1" stopColor="#555c66" />
        </linearGradient>
      </defs>
      <g stroke="#10141a" strokeWidth="1" strokeLinejoin="round">
        <path d={`M391 407${frontEdge}L1100 337${bottomEdgeBack}Z`} fill="url(#side)" />
        <path d={`M382 404${topEdge}L1102 307${frontEdgeBack}Z`} fill="#a9b6c8" />
        <path d="M382 404l9 3-1 30-9-4z" fill="#656c75" />
      </g>
    </svg>
  );
}

function Viewport() {
  return (
    <main className="relative flex-1 bg-linear-to-b from-[#005f9f] to-[#001033]">
      <PartModel />
      <div className="relative flex justify-center pt-[7px]">
        <div className="flex h-8 w-[323px] items-center justify-between border border-[#a3a3a3] bg-[#f8f8f8] px-1">
          {viewTools.map((tool) => (
            <button
              key={tool.icon}
              aria-label={tool.label}
              className={`relative flex h-6 w-[22px] items-center justify-center ${
                tool.pressed ? 'border border-[#a9abad] bg-[#dcdee1]' : ''
              }`}
            >
              <Icon name={tool.icon} size={17} />
              {tool.menu && (
                <svg width="4" height="4" viewBox="0 0 4 4" className="absolute -right-[2px] bottom-0" aria-hidden="true">
                  <path d="M4 0v4H0z" fill="#444" />
                </svg>
              )}
            </button>
          ))}
        </div>
      </div>
    </main>
  );
}

function FilterSelect() {
  const [hovered, setHovered] = useState('实体几何');

  return (
    <div className="relative mb-px mr-[18px] flex h-[25px] w-[177px] items-stretch border border-[#adadad] bg-[#f8f8f8]">
      <select aria-label="过滤器" className="flex-1 appearance-none pl-2 text-[#444]">
        <option>全部</option>
      </select>
      <span className="pointer-events-none flex w-[15px] items-center justify-center bg-[#d5d7d9]">
        <Caret />
      </span>
      <div className="absolute -left-px bottom-6 flex w-[177px] border border-[#b5b5b5] bg-white">
        <ul role="listbox" aria-label="过滤器选项" className="flex-1">
          {filterOptions.map((option) => (
            <li
              key={option}
              role="option"
              aria-selected={option === hovered}
              onMouseEnter={() => setHovered(option)}
              className={`h-[19px] pl-[5px] leading-[19px] ${option === hovered ? 'bg-[#aee2fe] text-[#222]' : 'text-[#444]'}`}
            >
              {option}
            </li>
          ))}
        </ul>
        <div className="flex w-[15px] flex-col justify-between border-l border-[#bcbcbc] bg-[#f8f8f8]">
          <button aria-label="向上滚动" className="flex h-[15px] rotate-180 items-center justify-center border-t border-[#bcbcbc]">
            <Caret light />
          </button>
          <button aria-label="向下滚动" className="flex h-[15px] items-center justify-center border-t border-[#bcbcbc]">
            <Caret light />
          </button>
        </div>
      </div>
    </div>
  );
}

function StatusBar() {
  return (
    <footer className="flex h-11 items-end border-t-2 border-[#999999] bg-[#eef0f3] text-[#444]">
      <div className="flex items-center gap-[7px] pb-px pl-[6px]">
        <button aria-label="显示导航器" className="flex h-[22px] w-[22px] items-center justify-center border border-[#adadad] bg-[#dfe1e4]">
          <Icon name="tree" />
        </button>
        <button aria-label="显示浏览器"><Icon name="globe" size={18} /></button>
        <button aria-label="全屏"><Icon name="browser" /></button>
      </div>
      <span className="ml-3 h-[22px] w-px self-end bg-[#adadad]" />
      <div className="mb-[3px] ml-[3px] text-[11px] leading-4">
        <p className="flex items-center gap-px">
          <Icon name="prompt" size={12} />
          选择要加厚的曲面或面组。
        </p>
        <p className="flex items-center">
          <span className="ml-[3px] mr-[5px] h-[5px] w-[5px] rounded-full bg-[#155f85]" />
          PRT0001层07-SOLID。
        </p>
      </div>
      <span className="ml-auto mr-10 h-7 w-px bg-[#adadad]" />
      <span className="h-7 w-px bg-[#adadad]" />
      <button aria-label="查找" className="mx-[2px] mb-[2px] flex h-6 w-[42px] items-center border border-[#c6c8ca] bg-[#fbfbfb]">
        <span className="flex h-full w-[27px] items-center justify-center border-r border-[#c6c8ca]">
          <Icon name="find" />
        </span>
        <span className="flex flex-1 justify-center">
          <Caret />
        </span>
      </button>
      <span className="mr-[97px] h-7 w-px bg-[#adadad]" />
      <FilterSelect />
    </footer>
  );
}

function LayerDialog() {
  const [name, setName] = useState('07-SOLID');
  const [layerId, setLayerId] = useState('');
  const button = 'h-[25px] border border-[#adadad] bg-[#f8f8f8]';

  return (
    <div role="dialog" aria-label="层属性" className="absolute right-0 top-0 w-[294px] border border-white bg-[#eef0f3] text-[#444]">
      <div className="grid h-[31px] grid-cols-[1fr_auto_1fr] items-center bg-[#e6e7e9] px-[11px] pt-[2px] text-[#aaaaaa]">
        <h2 className="col-start-2">层属性</h2>
        <button aria-label="关闭" className="justify-self-end">
          <svg width="8" height="8" viewBox="0 0 8 8" aria-hidden="true">
            <path d="M.5.500l7 7M7.500.500l-7 7" stroke="#999" strokeWidth="2.200" />
          </svg>
        </button>
      </div>
      <form className="px-[11px]" onSubmit={(e) => e.preventDefault()}>
        <div className="mt-4 flex items-center">
          <label htmlFor="layer-name" className="w-[45px]">名称:</label>
          <input
            id="layer-name"
            value={name}
            onChange={(e) => setName(e.target.value)}
            className="h-[25px] min-w-0 flex-1 border border-[#adadad] bg-white px-[3px]"
          />
        </div>
        <div className="mt-[6px] flex items-center">
          <label htmlFor="layer-id" className="w-[45px] whitespace-nowrap">层标识:</label>
          <input
            id="layer-id"
            value={layerId}
            onChange={(e) => setLayerId(e.target.value)}
            className="h-[25px] min-w-0 flex-1 border border-[#adadad] bg-white px-[3px]"
          />
          <button className={`ml-[10px] w-[71px] ${button}`}>信息(N)...</button>
        </div>
        <div role="tablist" className="mt-4 flex h-[25px] text-[#777]">
          <button role="tab" aria-selected="true" className="z-10 -mb-px w-[59px] border-x border-t border-[#c6c8ca] bg-[#fbfbfb] text-[#222]">
            内容(E)
          </button>
          <button role="tab" aria-selected="false" className="w-[61px] border-r border-t border-[#c6c8ca] pt-px">规则(U)</button>
          <button role="tab" aria-selected="false" className="w-[59px] border-r border-t border-[#c6c8ca] pt-px">注解(T)</button>
        </div>
        <div className="border border-[#c6c8ca] bg-[#fbfbfb] px-[10px] pb-4 pt-[18px]">
          <div className="h-[179px] border border-[#adadad] bg-[#eafbdc]">
            <table className="w-full table-fixed border-collapse bg-[#fbfbfb] text-left text-[#222]">
              <thead>
                <tr className="h-6 border-b border-[#c6c8ca]">
                  <th className="pl-[6px] pt-[3px] font-normal">项</th>
                  <th className="w-7 border-l border-[#c6c8ca] pl-[6px] pt-[3px] font-normal">状</th>
                </tr>
              </thead>
            </table>
          </div>
          <div className="mt-[6px] flex">
            <button className="h-[25px] w-[53px] border border-[#adadad] bg-[#dfe1e4]">包括...</button>
            <button className={`w-[53px] ${button}`}>排除...</button>
            <button disabled className="ml-auto h-[25px] w-11 border border-[#dadcde] bg-[#eceef1] text-[#b5b5b5]">移除</button>
          </div>
        </div>
        <div className="-mx-[11px] mb-[10px] mt-4 border-t border-[#c6c8ca]" />
        <div className="mb-[11px] flex">
          <button className={`w-11 ${button}`}>暂停</button>
          <button className="ml-auto mr-2 h-[25px] w-[62px] border border-[#6fc8f6] bg-[#a0dffe]">确定(O)</button>
          <button className={`w-[62px] ${button}`}>取消(C)</button>
        </div>
      </form>
    </div>
  );
}

// Part of the neighbouring window that shows beside the main one
function SideWindow() {
  return (
    <div className="flex w-[77px] shrink-0 flex-col">
      <div className="h-[175px] bg-[#f8f8f8]" />
      <div className="relative flex-1 bg-linear-to-b from-[#005f9f] to-[#001033]">
        <svg width="12" height="56" viewBox="0 0 12 56" className="absolute bottom-[141px] right-0" aria-hidden="true">
          <rect x="3.500" y=".5" width="5" height="50" rx="2.500" fill="#34485a" />
          <rect x="5" y="24" width="2" height="22" fill="#1fa9e8" />
          <circle cx="6" cy="49" r="5.500" fill="#34485a" />
          <circle cx="6" cy="49" r="4.200" fill="#33b7ea" />
        </svg>
      </div>
      <div className="h-10 border-t-2 border-[#a3a3a3] bg-[#eef0f3] pt-[14px]">
        <div className="flex h-6 w-[59px] border-x border-t border-[#adadad] bg-[#fbfbfb]">
          <span className="flex-1" />
          <button aria-label="展开" className="flex w-[15px] items-center justify-center border-l border-[#adadad]">
            <Caret />
          </button>
        </div>
      </div>
    </div>
  );
}

function Watermark() {
  return (
    <div className="pointer-events-none absolute bottom-[5px] right-[5px] flex w-[206px] bg-white/35">
      <svg width="70" height="62" viewBox="0 0 70 62" aria-hidden="true" className="-mr-3 shrink-0">
        <g fill="none">
          <ellipse cx="23" cy="22" rx="22" ry="14" transform="rotate(42 23 22)" stroke="#8fa4b2" strokeOpacity=".75" strokeWidth="4" />
          <ellipse cx="26" cy="38" rx="17" ry="10" transform="rotate(-32 26 38)" stroke="#dfe5ea" strokeOpacity=".9" strokeWidth="4" />
          <path d="M38 24c14-9 21 2 15 16S35 60 28 52" stroke="#e58a8a" strokeOpacity=".8" strokeWidth="4" />
        </g>
      </svg>
      <div className="flex h-[62px] flex-col items-start">
        <strong className="ml-3 text-[29px] leading-10 text-[#3cb371]/60">野火论坛</strong>
        <span className="text-[15px] leading-4 text-[#7fc4c4]/60">www.proewildfire.cn</span>
      </div>
    </div>
  );
}

export default function App() {
  return (
    <div className="relative flex h-screen overflow-hidden bg-[#a3a3a3] font-['Noto_Sans','Noto_Sans_CJK_SC',sans-serif] text-[12px] leading-4 text-[#333]">
      <div className="flex min-w-0 flex-1 flex-col border-x-4 border-t-4 border-[#a3a3a3]">
        <TitleBar />
        <Ribbon />
        <div className="flex min-h-0 flex-1">
          <LayerPanel />
          <Viewport />
        </div>
        <StatusBar />
      </div>
      <SideWindow />
      <LayerDialog />
      <Watermark />
    </div>
  );
}
